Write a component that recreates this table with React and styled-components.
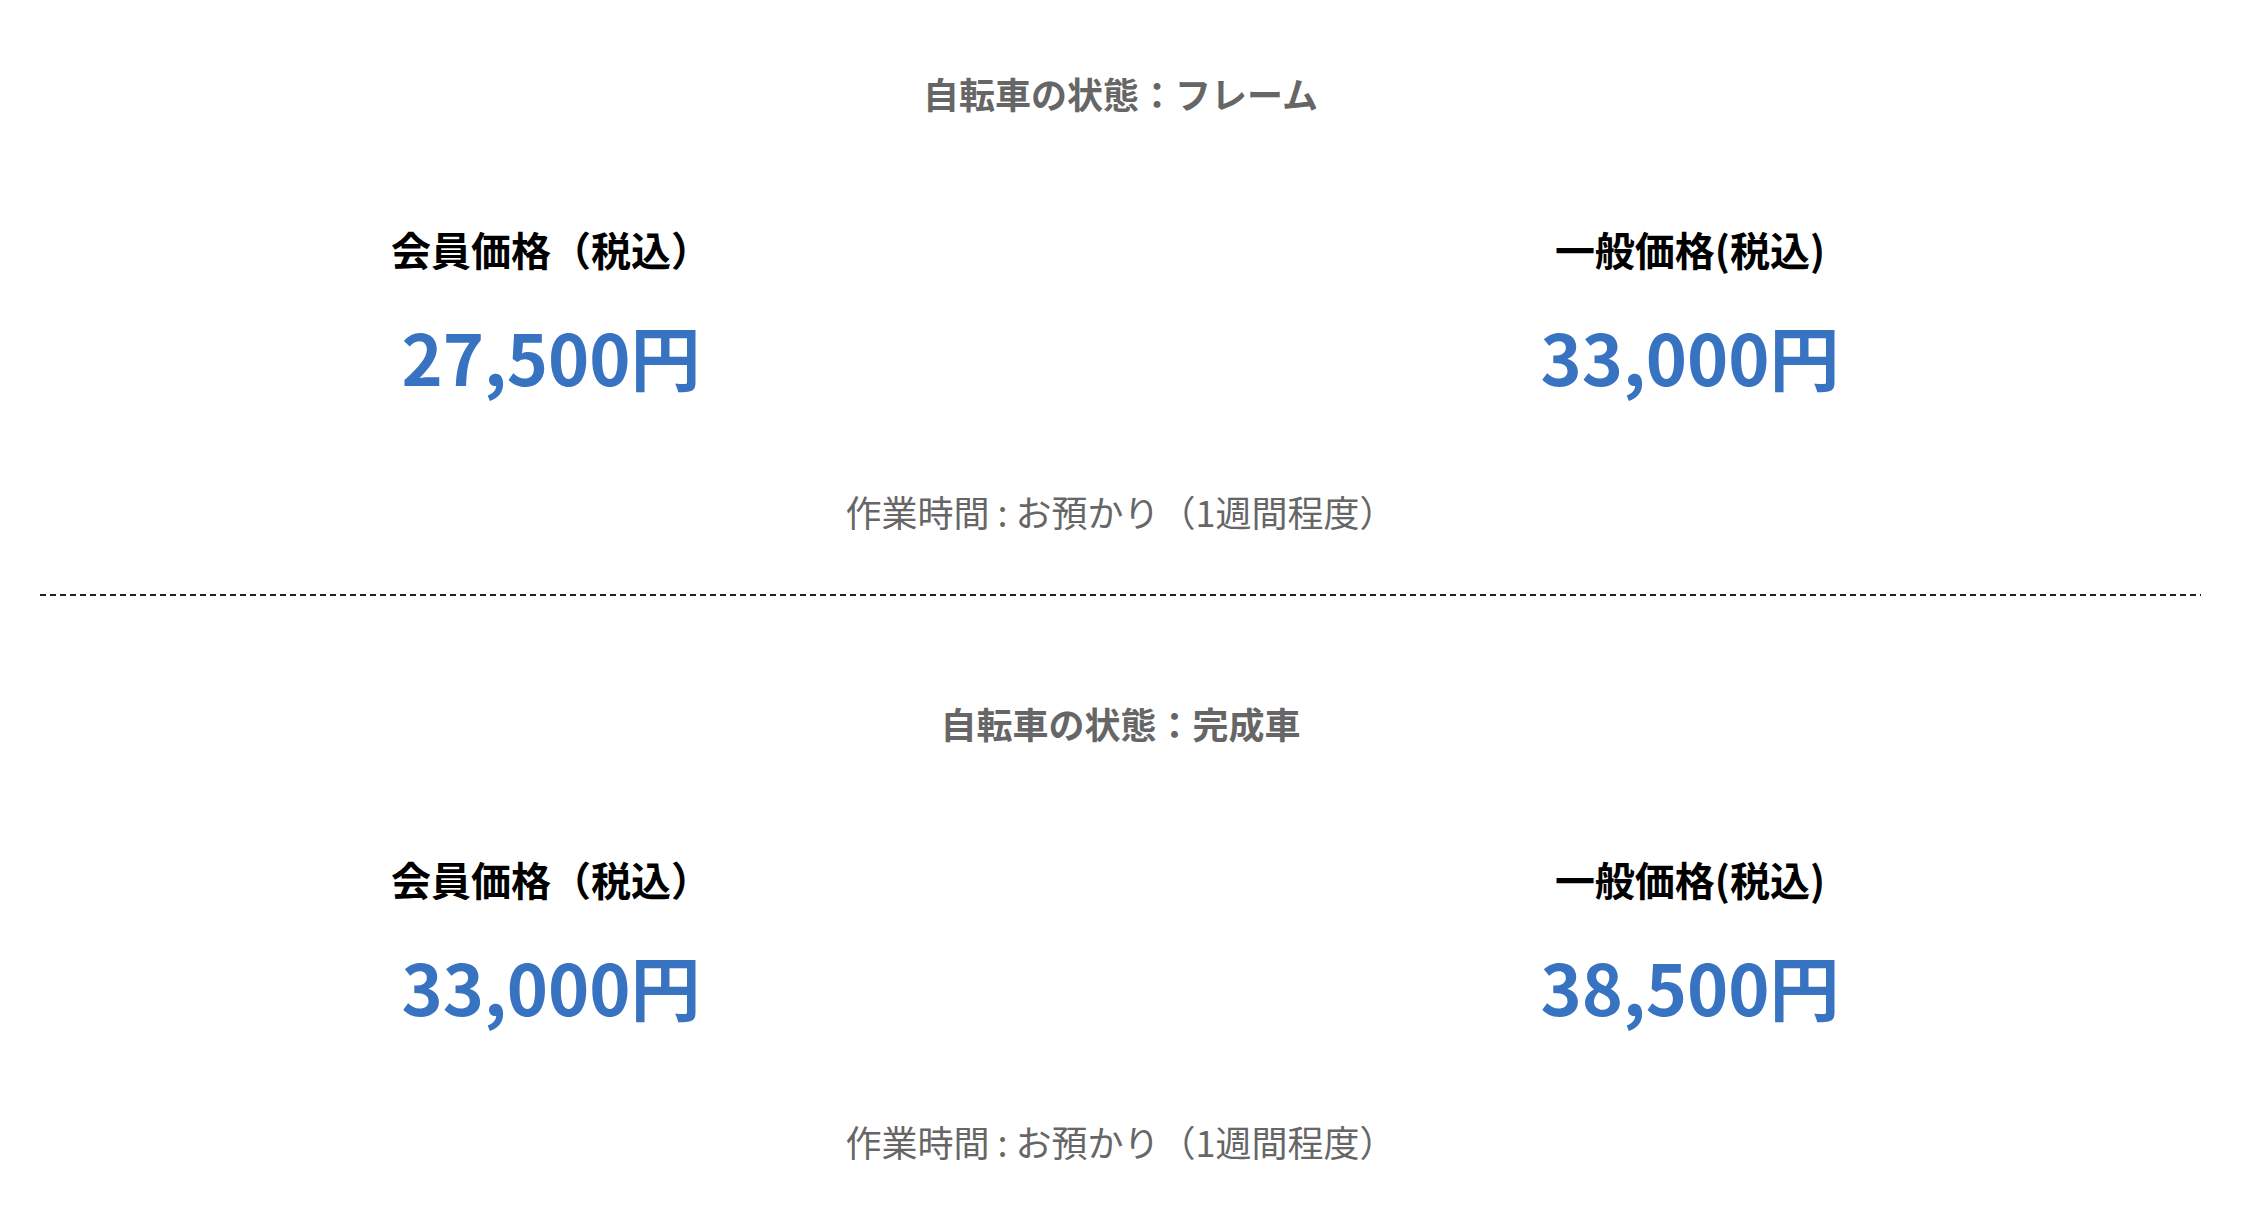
import React from "react";
import styled, { createGlobalStyle } from "styled-components";

const plans = [
  {
    state: "フレーム",
    member: "27,500円",
    general: "33,000円",
  },
  {
    state: "完成車",
    member: "33,000円",
    general: "38,500円",
  },
];

function PriceSection({ plan }) {
  return (
    <Section>
      <Title>自転車の状態：{plan.state}</Title>
      <PriceRow>
        <PriceCol>
          <Label>会員価格（税込）</Label>
          <Price>{plan.member}</Price>
        </PriceCol>
        <PriceCol>
          <Label>一般価格(税込)</Label>
          <Price>{plan.general}</Price>
        </PriceCol>
      </PriceRow>
      <WorkTime>作業時間 : お預かり（1週間程度）</WorkTime>
    </Section>
  );
}

export default function App() {
  return (
    <>
      <GlobalStyle />
      <Page>
        {plans.map((plan, i) => (
          <React.Fragment key={plan.state}>
            <PriceSection plan={plan} />
            {i < plans.length - 1 && <Divider />}
          </React.Fragment>
        ))}
      </Page>
    </>
  );
}

const GlobalStyle = createGlobalStyle`
  html, body {
    margin: 0;
    padding: 0;
    background: #ffffff;
  }
  body {
    font-family: "Noto Sans CJK JP", "Noto Sans", sans-serif;
  }
  * {
    box-sizing: border-box;
  }
`;

const Page = styled.div`
  padding: 0 59px 0 40px;
`;

const Section = styled.section`
  display: flex;
  flex-direction: column;
  align-items: center;
  padding: 66px 0 56px;
`;

const Title = styled.h2`
  margin: 0;
  font-size: 36px;
  line-height: 54px;
  font-weight: 700;
  color: #666666;
`;

const PriceRow = styled.div`
  width: 100%;
  display: grid;
  grid-template-columns: 1022px 1022px;
  justify-content: space-between;
  margin-top: 99px;
`;

const PriceCol = styled.div`
  display: flex;
  flex-direction: column;
  align-items: center;
  gap: 33px;
`;

const Label = styled.p`
  margin: 0;
  font-size: 40px;
  line-height: 60px;
  font-weight: 700;
  color: #000000;
`;

const Price = styled.p`
  margin: 0;
  font-size: 70px;
  line-height: 88px;
  font-weight: 700;
  color: #3873c2;
`;

const WorkTime = styled.p`
  margin: 84px 0 0;
  font-size: 36px;
  line-height: 54px;
  font-weight: 400;
  color: #666666;
`;

const Divider = styled.hr`
  margin: 0 0 34px;
  border: none;
  height: 2px;
  background: repeating-linear-gradient(
    to right,
    #222222 0 6px,
    transparent 6px 10px
  );
`;
